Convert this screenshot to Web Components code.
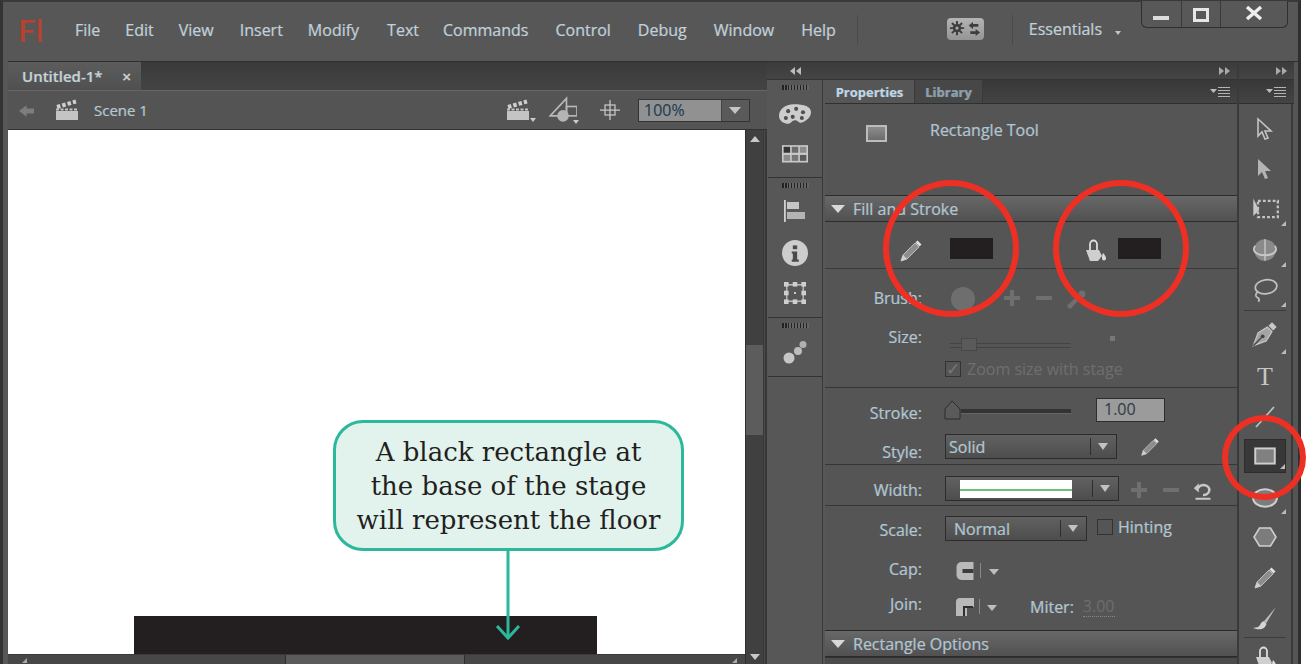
<!DOCTYPE html>
<html lang="en">
<head>
<meta charset="utf-8">
<title>Flash</title>
<style>
  html, body { margin: 0; padding: 0; width: 1306px; height: 664px; overflow: hidden; background: #fff; }
  body { font-family: "Open Sans", "Liberation Sans", sans-serif; }
</style>
</head>
<body>
<fl-app></fl-app>
<script>
(function () {
  const FRINGE = '-0.5px 0 rgba(90,180,235,.45), 0.5px 0 rgba(225,180,130,.3)';
  const UI_FONT = '"Open Sans", "Liberation Sans", sans-serif';

  // all the little glyphs of the app, 24x24 unless they say otherwise
  const ICONS = {
    select: '<path d="M5 2v17l4-4 3 7 3-1-3-7h6z" fill="none" stroke="#c4c4c4" stroke-width="1.6"/>',
    subselect: '<path d="M5 2v17l4-4 3 7 3-1-3-7h6z" fill="#b4b4b4"/>',
    transform: '<path d="M2 3v15l5-5z" fill="#c8c8c8"/><rect x="6" y="5" width="17" height="14" fill="none" stroke="#c4c4c4" stroke-width="2" stroke-dasharray="2.4 1.8"/>',
    rotate3d: '<circle cx="12" cy="12" r="10" fill="#8a8a8a"/><path d="M12 2v20M2 13c4 5 16 5 20 0" fill="none" stroke="#bcbcbc" stroke-width="1.6"/><path d="M3 8c-4 5 2 9 9 9s13-4 9-9" fill="none" stroke="#c8c8c8" stroke-width="1.6"/>',
    lasso: '<ellipse cx="13" cy="9" rx="10" ry="6.5" transform="rotate(-8 13 9)" fill="none" stroke="#c0c0c0" stroke-width="1.6"/><path d="M5 14c-2 2-2 4 0 5s2 2 1 4" fill="none" stroke="#c0c0c0" stroke-width="1.5"/>',
    pen: '<path d="M2 22L6 11l8-5 4 4-5 8z" fill="#a4a4a4" stroke="#c8c8c8"/><path d="M2 22l7-7" stroke="#444" stroke-width="1.2"/><circle cx="10" cy="14" r="1.6" fill="#444"/><path d="M15 5l3-3 4 4-3 3z" fill="#c8c8c8"/>',
    line: '<path d="M3 23L21 3" stroke="#bdbdbd" stroke-width="1.8"/>',
    rect: '<rect x="3" y="5" width="18" height="14" fill="#808080" stroke="#cfcfcf" stroke-width="1.8"/>',
    oval: '<ellipse cx="12" cy="12" rx="11" ry="8" fill="#7c7c7c" stroke="#cfcfcf" stroke-width="1.8"/>',
    poly: '<path d="M6.5 3h11L23 12l-5.5 9h-11L1 12z" fill="#7c7c7c" stroke="#cfcfcf" stroke-width="1.6"/>',
    pencil: '<path d="M16 4l4 4L8 20l-6 2 2-6z" fill="#8d8d8d" stroke="#bdbdbd" stroke-width="1"/><path d="M16.5 3.5l2-2 4 4-2 2z" fill="#e2e2e2"/><path d="M2 22l2-6 4 4z" fill="#cfcfcf"/>',
    brush: '<path d="M22 2L11 15l2 2z" fill="#bcbcbc"/><path d="M11 15c-3 0-3 4-5 5-2 .8-3 1-5 1 3 2 9 2 11-1 1-1.5 2-3 1-3z" fill="#d4d4d4"/>',
    bucket: '<path d="M7 13V5a3.5 3.5 0 0 1 7 0v8" fill="none" stroke="#dcdcdc" stroke-width="1.8"/><path d="M3 11h13l3 6-4 5H7z" fill="#cfcfcf"/><path d="M20 14c2 2 3 4 3 5.5a2 2 0 0 1-4 0c0-1 0-3 1-5.5z" fill="#dcdcdc"/>',
    palette: '<path d="M13 3C5 3 0 8 0 13s5 7 8 7 3-3 6-3 3 3 6 2 8-4 8-9-6-7-15-7z" fill="#cdcdcd"/><g fill="#4f4f4f"><circle cx="6" cy="15" r="1.8"/><circle cx="12" cy="14" r="1.8"/><circle cx="8" cy="9" r="1.8"/><circle cx="15" cy="7" r="1.8"/><circle cx="21" cy="10" r="1.8"/><circle cx="20" cy="15" r="1.8"/></g>',
    swatches: '<rect x="0" y="2" width="24" height="16" fill="#c9c9c9"/><rect x="1.5" y="3.5" width="6" height="5.5" fill="#333"/><rect x="9" y="3.5" width="6" height="5.5" fill="#6b6b6b"/><rect x="16.5" y="3.5" width="6" height="5.5" fill="#8c8c8c"/><rect x="1.5" y="11" width="6" height="5.5" fill="#8a8a8a"/><rect x="9" y="11" width="6" height="5.5" fill="#777"/><rect x="16.5" y="11" width="6" height="5.5" fill="#5a5a5a"/>',
    align: '<rect x="1" y="1" width="1.8" height="22" fill="#d0d0d0"/><rect x="4" y="3" width="12" height="7" fill="#c6c6c6"/><rect x="4" y="13" width="18" height="7" fill="#b4b4b4"/>',
    info: '<circle cx="12" cy="12" r="12" fill="#cdcdcd"/><rect x="10" y="5" width="4" height="3.5" fill="#4a4a4a"/><path d="M9 10.5h5V18h1.5v2h-6.5v-2H10v-5.5H9z" fill="#4a4a4a"/>',
    free: '<path d="M3 3h18v18H3z" fill="none" stroke="#bdbdbd" stroke-width="1.5"/><g fill="#cfcfcf"><rect x="0" y="0" width="5" height="5"/><rect x="9.5" y="0" width="5" height="5"/><rect x="19" y="0" width="5" height="5"/><rect x="0" y="9.5" width="5" height="5"/><rect x="19" y="9.5" width="5" height="5"/><rect x="0" y="19" width="5" height="5"/><rect x="9.5" y="19" width="5" height="5"/><rect x="19" y="19" width="5" height="5"/></g><rect x="11" y="11" width="2" height="2" fill="#ddd"/>',
    motion: '<circle cx="6" cy="18" r="5.5" fill="#c6c6c6"/><circle cx="15" cy="11" r="4" fill="#bcbcbc"/><circle cx="20" cy="4.5" r="3.5" fill="#b0b0b0"/>',
    clap: '<path d="M1 13h22v9H1z" fill="#c4c4c4"/><path d="M1 11.5h22" stroke="#c4c4c4" stroke-width="2" stroke-dasharray="3 1.5"/><path d="M2 9L21 3.5" stroke="#cfcfcf" stroke-width="4" stroke-dasharray="3.5 2"/>',
    shapes: '<path d="M1 17L15 2v15z" fill="none" stroke="#b8b8b8" stroke-width="1.4"/><rect x="15" y="9" width="9" height="8" fill="none" stroke="#b8b8b8" stroke-width="1.4"/><circle cx="12" cy="17" r="5" fill="#b4b4b4"/>',
    target: '<path d="M12 0v24M0 12h24" stroke="#c8c8c8" stroke-width="1.5"/><rect x="6" y="6" width="12" height="12" fill="none" stroke="#c8c8c8" stroke-width="1.5"/>',
    back: '<path d="M0 12l9-7v4h9v6H9v4z" fill="#7d7d7d"/>',
    undo: '<path d="M3 22.500h18" stroke="#c8c8c8" stroke-width="2.4"/><path d="M6 10a7 6 0 1 1 6 8" fill="none" stroke="#c8c8c8" stroke-width="3"/><path d="M1 10l6-6v11z" fill="#c8c8c8"/>',
    cap: '<path d="M6 3h12v18H6a5 5 0 0 1-5-5V8a5 5 0 0 1 5-5z" fill="#b9b9b9"/><rect x="7" y="10" width="11" height="4" fill="#3c3c3c"/>',
    join: '<path d="M1 21V7a4 4 0 0 1 4-4h14v9h-7v9z" fill="#b9b9b9"/><path d="M9 21v-9h9" fill="none" stroke="#2e2e2e" stroke-width="2"/>',
    plus: '<path d="M8 0v16M0 8h16" stroke="#6f6f6f" stroke-width="4"/>',
    minus: '<path d="M0 8h16" stroke="#6f6f6f" stroke-width="4"/>',
    nodash: '<path d="M2 18L14 6" stroke="#6f6f6f" stroke-width="4"/><circle cx="15" cy="5" r="3.5" fill="#6f6f6f"/><circle cx="3" cy="17" r="2.5" fill="#6f6f6f"/>',
    gear: '<circle cx="8" cy="8" r="3.5" fill="none" stroke="#3e3e3e" stroke-width="2.4"/><path d="M8 0v16M0 8h16M2.3 2.3l11.4 11.4M13.7 2.3L2.3 13.700" stroke="#3e3e3e" stroke-width="2.2"/><circle cx="8" cy="8" r="1.8" fill="#a9a9a9"/><path d="M26 1l-5 4 5 4V6.500h6v-3h-6zM29 9l5 4-5 4v-2.500h-6v-3h6z" fill="#3e3e3e"/>'
  };

  function glyph(name, size, box) {
    const vb = box || '0 0 24 24';
    return `<svg width="${size}" height="${size}" viewBox="${vb}" aria-hidden="true" style="display:block">${ICONS[name]}</svg>`;
  }

  class FlApp extends HTMLElement {
    constructor() {
      super();
      this.attachShadow({ mode: 'open' });
      this.shadowRoot.innerHTML = `
        <style>
          :host { display: block; position: relative; width: 1306px; height: 664px; overflow: hidden; background: #fff; }
          .frame { width: 1301px; height: 664px; box-sizing: border-box; background: #575757; border-right: 3px solid #2f2f2f; border-left: 3px solid #333; border-top: 2px solid #393939; display: flex; flex-direction: column; }
          .work { flex: 1; min-height: 0; display: flex; margin-left: 5px; border-top: 1px solid #2f2f2f; }
          fl-document { width: 759px; flex: none; }
          fl-strip { width: 58px; flex: none; }
          fl-properties { width: 412px; flex: none; }
          fl-tools { width: 61px; flex: none; }
          .ring { position: absolute; box-sizing: border-box; border: 6px solid #ee2f24; border-radius: 50%; pointer-events: none; }
        </style>
        <div class="frame">
          <fl-menubar></fl-menubar>
          <div class="work">
            <fl-document></fl-document>
            <fl-strip></fl-strip>
            <fl-properties></fl-properties>
            <fl-tools></fl-tools>
          </div>
        </div>
        <div class="ring" style="left:883px;top:180px;width:136px;height:137px"></div>
        <div class="ring" style="left:1053px;top:180px;width:136px;height:137px"></div>
        <div class="ring" style="left:1222px;top:415px;width:84px;height:85px"></div>
      `;
    }
  }

  class FlMenubar extends HTMLElement {
    constructor() {
      super();
      this.attachShadow({ mode: 'open' });
      const items = [['File', 25], ['Edit', 25], ['View', 26], ['Insert', 25], ['Modify', 28], ['Text', 24], ['Commands', 27], ['Control', 27], ['Debug', 27], ['Window', 27], ['Help', 0]];
      this.shadowRoot.innerHTML = `
        <style>
          :host { display: flex; align-items: flex-start; height: 59px; flex: none; font: 16px ${UI_FONT}; color: #c4d0d6; text-shadow: ${FRINGE}; }
          .logo { font: 30px/30px "Lato", sans-serif; color: #b8412f; margin: 13px 0 0 15px; width: 57px; letter-spacing: 1px; text-shadow: .6px 0 #b8412f; }
          nav { display: flex; margin-top: 16px; }
          nav span { line-height: 24px; white-space: nowrap; }
          .sep { width: 1px; height: 30px; background: #4a4a4a; margin-top: 13px; }
          .gear { width: 37px; height: 22px; margin: 16px 0 0 89px; background: linear-gradient(#b4b4b4, #959595); border-radius: 4px; display: flex; align-items: center; justify-content: center; }
          .workspace { margin: 15px 0 0 16px; line-height: 24px; width: 112px; position: relative; }
          .workspace i { position: absolute; left: 86px; top: 14px; border: 3.5px solid transparent; border-top: 4px solid #c4c4c4; border-bottom: 0; }
          .winctl { display: flex; height: 26px; margin-top: -1px; border: 1px solid #2f2f2f; border-top: 0; border-radius: 0 0 6px 6px; background: #585858; }
          .winctl div { display: flex; align-items: center; justify-content: center; border-right: 1px solid #3a3a3a; }
          .winctl div:last-child { border-right: 0; }
        </style>
        <div class="logo">Fl</div>
        <nav>${items.map(i => `<span style="margin-right:${i[1]}px">${i[0]}</span>`).join('')}</nav>
        <div class="sep" style="margin-left:21px"></div>
        <div class="gear"><svg width="32" height="16" viewBox="0 0 34 18">${ICONS.gear}</svg></div>
        <div class="sep" style="margin-left:28px"></div>
        <div class="workspace">Essentials<i></i></div>
        <div class="winctl">
          <div style="width:39px"><svg width="16" height="20" viewBox="0 0 16 20" style="margin-top:-2px"><rect y="13" width="16" height="4" fill="#dcdcdc"/></svg></div>
          <div style="width:38px"><svg width="16" height="20" viewBox="0 0 16 20" style="margin-top:4px"><rect x="1.5" y="3.5" width="13" height="11" fill="none" stroke="#e6e6e6" stroke-width="3"/></svg></div>
          <div style="width:66px"><svg width="18" height="20" viewBox="0 0 18 20" style="margin-top:-1px"><path d="M2 3l14 12M16 3L2 15" stroke="#eee" stroke-width="3.4"/></svg></div>
        </div>
      `;
    }
  }

  class FlDocument extends HTMLElement {
    constructor() {
      super();
      this.attachShadow({ mode: 'open' });
      this.shadowRoot.innerHTML = `
        <style>
          :host { display: flex; flex-direction: column; font: 15px ${UI_FONT}; color: #b9c7ce; text-shadow: ${FRINGE}; background: #4c4c4c; }
          .tabs { height: 28px; flex: none; background: linear-gradient(#3a3a3a, #444); display: flex; }
          .tab { width: 133px; background: linear-gradient(#5c5c5c, #505050); display: flex; align-items: center; justify-content: space-between; box-sizing: border-box; padding: 0 10px 0 14px; font-weight: 600; color: #c8d2d6; }
          .tab b { font: 700 15px/1 "Liberation Sans", sans-serif; color: #ccc; text-shadow: none; }
          .bar { height: 40px; flex: none; background: #545454; border-top: 1px solid #666; box-sizing: border-box; border-bottom: 1px solid #333; display: flex; align-items: center; padding-left: 11px; }
          .bar svg { flex: none; }
          .scene { margin-left: 15px; width: 412px; }
          .caret { position: relative; width: 43px; display: flex; }
          .caret::after { content: ""; position: absolute; left: 24px; bottom: 0; border: 3.5px solid transparent; border-top: 4px solid #ccc; border-bottom: 0; }
          .zoom { display: flex; width: 112px; height: 23px; margin-left: 18px; border: 1px solid #333; box-sizing: border-box; }
          .zoom span { flex: 1; background: #919191; color: #2f3a44; padding-left: 5px; line-height: 21px; font-size: 16px; text-shadow: -.5px 0 rgba(40,130,200,.5); }
          .zoom i { width: 27px; background: #5a5a5a; border-left: 1px solid #444; position: relative; }
          .zoom i::after { content: ""; position: absolute; left: 7px; top: 7px; border: 6px solid transparent; border-top: 7px solid #c4c4c4; border-bottom: 0; }
          .view { flex: 1; min-height: 0; display: flex; }
          .canvas { width: 737px; flex: none; display: flex; flex-direction: column; }
          fl-stage { flex: 1; min-height: 0; }
          .hbar { height: 10px; flex: none; box-sizing: border-box; display: flex; background: #474747; border-top: 1px solid #3a3a3a; }
          .hbar div { position: relative; }
          .hbar div:nth-child(1) { width: 277px; }
          .hbar div:nth-child(2) { width: 178px; background: #5b5b5b; border-left: 1px solid #2e2e2e; border-right: 1px solid #2e2e2e; }
          .hbar div:nth-child(3) { flex: 1; }
          .hbar i { position: absolute; bottom: 1px; border-left: 5px solid transparent; border-bottom: 5px solid #a8a8a8; }
          .vbar { width: 18px; background: #404040; border-left: 1px solid #2f2f2f; display: flex; flex-direction: column; align-items: center; box-sizing: border-box; padding-top: 6px; }
          .vbar .up { border: 5px solid transparent; border-bottom: 6px solid #c8c8c8; border-top: 0; }
          .vbar .thumb { width: 100%; height: 90px; margin-top: 203px; background: #5c5c5c; }
          .vbar .dn { margin-top: auto; margin-bottom: 4px; border: 5px solid transparent; border-top: 6px solid #c8c8c8; border-bottom: 0; }
          .rail { flex: 1; background: #4a4a4a; border-left: 1px solid #383838; border-right: 2px solid #383838; }
        </style>
        <div class="tabs"><div class="tab">Untitled-1*<b>&times;</b></div></div>
        <div class="bar">
          <span style="margin-top:2px">${glyph('back', 20)}</span>
          <span style="width:16px"></span>${glyph('clap', 24)}
          <span class="scene">Scene 1</span>
          <span class="caret">${glyph('clap', 24)}</span>
          <span class="caret" style="width:51px">${glyph('shapes', 28)}</span>
          ${glyph('target', 20)}
          <div class="zoom"><span>100%</span><i></i></div>
        </div>
        <div class="view">
          <div class="canvas">
            <fl-stage>
              <fl-callout>A black rectangle at<br>the base of the stage<br>will represent the floor</fl-callout>
            </fl-stage>
            <div class="hbar"><div><i style="left:14px"></i></div><div></div><div><i style="right:8px"></i></div></div>
          </div>
          <div class="vbar"><span class="up"></span><span class="thumb"></span><span class="dn"></span></div>
          <div class="rail"></div>
        </div>
      `;
    }
  }

  class FlStage extends HTMLElement {
    constructor() {
      super();
      this.attachShadow({ mode: 'open' });
      this.shadowRoot.innerHTML = `
        <style>
          :host { display: block; position: relative; background: #fff; overflow: hidden; text-shadow: none; }
          .floor { position: absolute; left: 126px; bottom: 0; width: 463px; height: 38px; background: #231f20; }
        </style>
        <div class="floor"></div>
        <slot></slot>
      `;
    }
  }

  class FlCallout extends HTMLElement {
    constructor() {
      super();
      this.attachShadow({ mode: 'open' });
      this.shadowRoot.innerHTML = `
        <style>
          :host { display: block; position: absolute; left: 325px; top: 290px; width: 351px; height: 131px; box-sizing: border-box; background: #e2f3ed; border: 3px solid #2bb89c; border-radius: 30px; font: 26px/34px "DejaVu Serif", serif; color: #231f20; text-align: center; padding-top: 12px; }
          svg { position: absolute; left: 157px; top: 127px; }
        </style>
        <div><slot></slot></div>
        <svg width="30" height="95" viewBox="0 0 30 95"><path d="M15 0v88" stroke="#2bb89c" stroke-width="3" fill="none"/><path d="M4 76l11 12 11-12" stroke="#2bb89c" stroke-width="3" fill="none"/></svg>
      `;
    }
  }

  class FlStrip extends HTMLElement {
    constructor() {
      super();
      this.attachShadow({ mode: 'open' });
      const groups = [
        [98, [['palette', 32, '0 0 28 23'], ['swatches', 26]], [8, 13]],
        [140, [['align', 24], ['info', 26], ['free', 22]], [11, 17, 16]],
        [59, [['motion', 24]], [12]]
      ];
      this.shadowRoot.innerHTML = `
        <style>
          :host { display: flex; flex-direction: column; }
          .top { height: 17px; flex: none; background: linear-gradient(#3b3b3b, #454545); color: #c0c0c0; display: flex; align-items: center; justify-content: center; border-bottom: 1px solid #333; }
          .col { flex: 1; display: flex; flex-direction: column; border-right: 1px solid #3a3a3a; margin: 0 2px 0 1px; }
          .group { box-sizing: border-box; border-bottom: 1px solid #333; display: flex; flex-direction: column; align-items: center; padding-top: 5px; overflow: hidden; }
          .grip { width: 27px; height: 5px; flex: none; background: repeating-linear-gradient(90deg, #222 0 1.5px, #666 1.5px 3px); }
        </style>
        <div class="top"><svg width="12" height="8" viewBox="0 0 12 8"><path d="M5 0v8L0 4zM11 0v8L6 4z" fill="#bbb"/></svg></div>
        <div class="col">
          ${groups.map(g => `<div class="group" style="height:${g[0]}px"><div class="grip"></div>${g[1].map((ic, n) => `<div style="margin-top:${g[2][n]}px">${glyph(ic[0], ic[1], ic[2])}</div>`).join('')}</div>`).join('')}
        </div>
      `;
    }
  }

  class FlRow extends HTMLElement {
    constructor() {
      super();
      this.attachShadow({ mode: 'open' });
    }
    connectedCallback() {
      const h = this.getAttribute('h');
      const ly = this.getAttribute('ly') || 0;
      const line = this.hasAttribute('line');
      this.shadowRoot.innerHTML = `
        <style>
          :host { display: grid; grid-template-columns: 97px 1fr; column-gap: 23px; height: ${h}px; flex: none; box-sizing: border-box; ${line ? 'border-bottom: 1px solid #363636;' : ''} }
          .label { text-align: right; line-height: 20px; margin-top: ${ly}px; }
          .body { display: flex; align-items: flex-start; min-width: 0; position: relative; }
        </style>
        <div class="label">${this.getAttribute('label') || ''}</div>
        <div class="body"><slot></slot></div>
      `;
    }
  }

  class FlSelect extends HTMLElement {
    constructor() {
      super();
      this.attachShadow({ mode: 'open' });
      this.shadowRoot.innerHTML = `
        <style>
          :host { display: flex; box-sizing: border-box; height: 25px; border: 1px solid #2c2c2c; background: linear-gradient(#616161, #4d4d4d); flex: none; }
          .val { flex: 1; min-width: 0; display: flex; align-items: center; padding-left: 8px; border-right: 1px solid #2d2d2d; margin: 3px 0; }
          i { width: 25px; flex: none; position: relative; }
          i::after { content: ""; position: absolute; left: 7px; top: 8px; border: 5.5px solid transparent; border-top: 7px solid #c2c2c2; border-bottom: 0; }
        </style>
        <div class="val"><slot></slot></div><i></i>
      `;
    }
  }

  class FlSection extends HTMLElement {
    constructor() {
      super();
      this.attachShadow({ mode: 'open' });
      this.shadowRoot.innerHTML = `
        <style>
          :host { display: flex; align-items: center; height: 27px; box-sizing: border-box; flex: none; background: linear-gradient(#686868, #515151); border-top: 1px solid #2b2b2b; border-bottom: 1px solid #2b2b2b; padding-left: 6px; }
          i { border: 7px solid transparent; border-top: 8px solid #d8d8d8; border-bottom: 0; margin-right: 8px; margin-top: 1px; }
        </style>
        <i></i><slot></slot>
      `;
    }
  }

  class FlProperties extends HTMLElement {
    constructor() {
      super();
      this.attachShadow({ mode: 'open' });
      const tiny = (name, style) => `<svg width="16" height="16" viewBox="0 0 16 16" style="flex:none;${style}">${ICONS[name]}</svg>`;
      this.shadowRoot.innerHTML = `
        <style>
          :host { display: flex; flex-direction: column; font: 16px ${UI_FONT}; color: #b4c5cf; text-shadow: ${FRINGE}; background: #555; overflow: hidden; }
          .top { height: 17px; flex: none; background: linear-gradient(#3b3b3b, #454545); border-bottom: 1px solid #333; display: flex; align-items: center; justify-content: flex-end; padding-right: 7px; }
          .tabs { height: 23px; flex: none; display: flex; background: linear-gradient(#383838, #444); border-bottom: 1px solid #2f2f2f; align-items: stretch; }
          .tabs span { display: flex; align-items: center; justify-content: center; font-size: 13px; font-weight: 700; }
          .on { width: 89px; background: #565656; color: #bfd7e6; }
          .off { width: 67px; background: #474747; color: #8fa0ac; border-right: 1px solid #3a3a3a; border-left: 1px solid #3a3a3a; }
          .menu { margin-left: auto; margin-right: 6px; align-self: center; display: flex; }
          .head { height: 91px; flex: none; display: flex; box-sizing: border-box; padding: 21px 0 0 41px; }
          .head .rect { width: 21px; height: 17px; box-sizing: border-box; border: 2px solid #bcbcbc; background: linear-gradient(#8c8c8c, #6c6c6c); }
          .head span { margin-left: 43px; margin-top: -5px; line-height: 20px; }
          .fs { height: 47px; flex: none; display: flex; align-items: flex-start; box-sizing: border-box; border-bottom: 1px solid #3a3a3a; padding-top: 16px; }
          .sw { width: 43px; height: 21px; background: #231f20; flex: none; }
          .dim { color: #6f6f6f; text-shadow: none; }
          .box { width: 16px; height: 16px; box-sizing: border-box; border: 1px solid #333; background: #555; flex: none; }
          .track { height: 4px; background: #333; flex: none; border-bottom: 1px solid #666; }
          .up { border: 5px solid transparent; border-top: 6px solid #bdbdbd; border-bottom: 0; width: 0; height: 0; flex: none; }
          .input { width: 69px; height: 24px; box-sizing: border-box; background: #9b9b9b; border: 1px solid #2e2e2e; color: #2e3a44; line-height: 21px; padding-left: 7px; text-shadow: none; flex: none; }
          .cellv { width: 112px; height: 18px; background: linear-gradient(#fff 52%, #6cc07e 52% 62%, #fff 62%); flex: none; }
          .miter { color: #6e6e6e; border-bottom: 1px dotted #888; text-shadow: none; line-height: 19px; height: 19px; }
          .pad { flex: 1; background: #4b4b4b; border-top: 1px solid #333; }
        </style>
        <div class="top"><svg width="12" height="8" viewBox="0 0 12 8"><path d="M1 0v8l5-4zM7 0v8l5-4z" fill="#aaa"/></svg></div>
        <div class="tabs"><span class="on">Properties</span><span class="off">Library</span>
          <div class="menu"><svg width="21" height="12" viewBox="0 0 21 12"><path d="M0 3h7L3.5 7z" fill="#bbb"/><path d="M8 1.5h12M8 4.5h12M8 7.5h12M8 10.5h12" stroke="#b4b4b4"/></svg></div>
        </div>
        <div class="head"><div class="rect"></div><span>Rectangle Tool</span></div>
        <fl-section>Fill and Stroke</fl-section>
        <div class="fs">
          <span style="margin-left:74px;margin-top:1px">${glyph('pencil', 24)}</span>
          <span class="sw" style="margin-left:27px"></span>
          <span style="margin-left:90px;margin-top:1px">${glyph('bucket', 24)}</span>
          <span class="sw" style="margin-left:11px"></span>
        </div>
        <fl-row label="Brush:" h="39" ly="19">
          <span style="width:24px;height:24px;border-radius:50%;background:#6e6e6e;margin-top:18px;margin-left:6px;flex:none"></span>
          ${tiny('plus', 'margin:21px 0 0 29px')}
          ${tiny('minus', 'margin:21px 0 0 16px')}
          <svg width="20" height="20" viewBox="0 0 20 20" style="margin:20px 0 0 15px;flex:none">${ICONS.nodash}</svg>
        </fl-row>
        <fl-row label="Size:" h="30" ly="19">
          <span style="margin-top:35px;width:121px;height:3px;border-top:1px solid #444;border-bottom:1px solid #444;margin-left:5px;position:relative;flex:none"><span style="position:absolute;left:11px;top:-6px;width:16px;height:13px;background:#5a5a5a;border:1px solid #484848;box-sizing:border-box"></span></span>
          <span style="margin:28px 0 0 39px;width:5px;height:5px;background:#777;flex:none"></span>
        </fl-row>
        <fl-row label="" h="50" line>
          <span class="box" style="margin-top:23px;color:#777;font-size:17px;line-height:13px;text-shadow:none">&#10003;</span>
          <span class="dim" style="margin:21px 0 0 6px;line-height:20px">Zoom size with stage</span>
        </fl-row>
        <fl-row label="Stroke:" h="46" ly="15">
          <svg width="17" height="20" viewBox="0 0 17 20" style="margin:12px 0 0 -1px;flex:none"><path d="M8 1l8 8v10H1V9z" fill="#5a5a5a" stroke="#2d2d2d"/></svg>
          <span class="track" style="width:110px;margin-top:21px"></span>
          <span class="input" style="margin:10px 0 0 25px">1.00</span>
        </fl-row>
        <fl-row label="Style:" h="31" line ly="8">
          <fl-select style="width:172px"><span style="margin-left:-5px">Solid</span></fl-select>
          <span style="margin:3px 0 0 23px">${glyph('pencil', 20)}</span>
        </fl-row>
        <fl-row label="Width:" h="41" line ly="15">
          <fl-select style="width:174px;margin-top:11px"><span class="cellv" style="margin-left:6px"></span></fl-select>
          ${tiny('plus', 'margin:17px 0 0 12px')}
          ${tiny('minus', 'margin:17px 0 0 16px')}
          <span style="margin:15px 0 0 14px">${glyph('undo', 20)}</span>
        </fl-row>
        <fl-row label="Scale:" h="47" ly="14">
          <fl-select style="width:142px;margin-top:10px">Normal</fl-select>
          <span class="box" style="margin:13px 0 0 10px"></span>
          <span style="margin:11px 0 0 5px;line-height:20px">Hinting</span>
        </fl-row>
        <fl-row label="Cap:" h="35" ly="6">
          <span style="margin:8px 0 0 10px">${glyph('cap', 20, '0 2 19 20')}</span>
          <span style="width:1px;height:15px;background:#888;margin:10px 0 0 5px;flex:none"></span>
          <span class="up" style="margin:16px 0 0 8px"></span>
        </fl-row>
        <fl-row label="Join:" h="42" ly="6">
          <span style="margin:9px 0 0 10px">${glyph('join', 20, '0 2 20 20')}</span>
          <span style="width:1px;height:15px;background:#888;margin:11px 0 0 4px;flex:none"></span>
          <span class="up" style="margin:17px 0 0 7px"></span>
          <span style="margin:9px 0 0 33px;line-height:20px">Miter:</span>
          <span class="miter" style="margin:9px 0 0 9px">3.00</span>
        </fl-row>
        <fl-section>Rectangle Options</fl-section>
        <div class="pad"></div>
      `;
    }
  }

  class FlTools extends HTMLElement {
    constructor() {
      super();
      this.attachShadow({ mode: 'open' });
      const list = [
        ['select', 24, 0], ['subselect', 24, 0], ['transform', 28, 1], ['rotate3d', 26, 1], ['lasso', 26, 1, 'sep'],
        ['pen', 28, 1], ['T'], ['line', 24, 0], ['rect', 26, 1, 'on'], ['oval', 26, 1], ['poly', 24, 0], ['pencil', 24, 0], ['brush', 26, 0, 'sep'], ['bucket', 24, 0]
      ];
      const heights = [40, 40, 40, 41, 41, 46, 40, 38, 41, 39, 40, 41, 40, 40];
      this.shadowRoot.innerHTML = `
        <style>
          :host { display: flex; flex-direction: column; border-left: 2px solid #3a3a3a; box-sizing: border-box; overflow: hidden; background: #555; }
          .top { height: 17px; flex: none; margin-right: 4px; background: linear-gradient(#3b3b3b, #454545); border-bottom: 1px solid #333; display: flex; align-items: center; justify-content: flex-end; padding-right: 7px; }
          .tabs { height: 23px; flex: none; margin-right: 4px; background: linear-gradient(#383838, #444); border-bottom: 1px solid #2f2f2f; display: flex; align-items: center; justify-content: flex-end; padding-right: 7px; }
          .list { flex: none; padding-top: 5px; width: 52px; border-right: 2px solid #3a3a3a; height: 600px; }
          .tool { position: relative; display: flex; align-items: center; justify-content: center; margin: 0 5px; box-sizing: border-box; }
          .tool.sep { border-bottom: 1px solid #3c3c3c; }
          .tool.on { background: #383838; border: 1px solid #2c2c2c; }
          .tool.more::after { content: ""; position: absolute; right: 0; bottom: 3px; border-left: 5px solid transparent; border-bottom: 5px solid #bbb; }
          .t { font: 26px/1 "Liberation Serif", serif; color: #c6c6c6; }
        </style>
        <div class="top"><svg width="12" height="8" viewBox="0 0 12 8"><path d="M1 0v8l5-4zM7 0v8l5-4z" fill="#aaa"/></svg></div>
        <div class="tabs"><svg width="21" height="12" viewBox="0 0 21 12"><path d="M0 3h7L3.5 7z" fill="#bbb"/><path d="M8 1.5h12M8 4.5h12M8 7.5h12M8 10.5h12" stroke="#b4b4b4"/></svg></div>
        <div class="list">
          ${list.map((t, n) => `<div class="tool ${t[2] ? 'more' : ''} ${t[3] || ''}" style="height:${t[3] === 'on' ? 34 : heights[n]}px;${t[3] === 'on' ? 'margin-top:4px;margin-bottom:5px;' : ''}">${t[0] === 'T' ? '<span class="t">T</span>' : glyph(t[0], t[1])}</div>`).join('')}
        </div>
      `;
    }
  }

  customElements.define('fl-stage', FlStage);
  customElements.define('fl-callout', FlCallout);
  customElements.define('fl-select', FlSelect);
  customElements.define('fl-row', FlRow);
  customElements.define('fl-section', FlSection);
  customElements.define('fl-menubar', FlMenubar);
  customElements.define('fl-document', FlDocument);
  customElements.define('fl-strip', FlStrip);
  customElements.define('fl-properties', FlProperties);
  customElements.define('fl-tools', FlTools);
  customElements.define('fl-app', FlApp);
})();
</script>
</body>
</html>
